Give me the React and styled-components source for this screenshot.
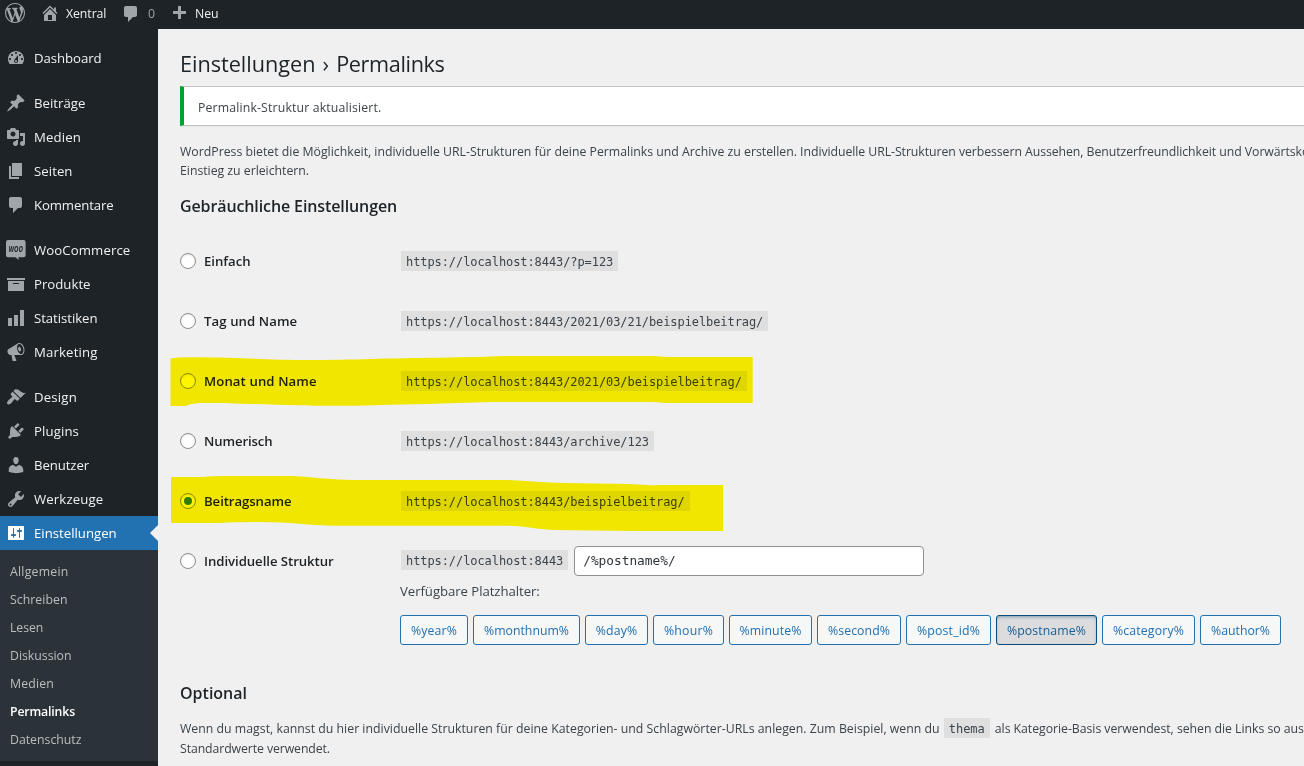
import React from "react";
import styled, { createGlobalStyle, css } from "styled-components";

const GlobalStyle = createGlobalStyle`
  * { box-sizing: border-box; }
  html, body { margin: 0; padding: 0; }
  body {
    background: #f0f0f0;
    color: #3c434a;
    font-family: "Open Sans", "Noto Sans", sans-serif;
    font-size: 12.3px;
    line-height: 19.5px;
    overflow: hidden;
  }
  h1, h2, p, ul { margin: 0; padding: 0; }
`;

const Page = styled.div`
  display: flex;
  flex-direction: column;
  width: 1304px;
  height: 766px;
  overflow: hidden;
`;

/* ---------- Admin bar ---------- */

const AdminBar = styled.header`
  flex: none;
  display: flex;
  align-items: center;
  height: 29px;
  padding: 0 0 3px 5px;
  background: #1d2327;
  color: #f0f0f1;
`;

const BarItem = styled.div`
  display: flex;
  align-items: center;
  gap: ${(p) => p.$gap || 6}px;
  width: ${(p) => p.$width}px;
  white-space: nowrap;
  letter-spacing: ${(p) => p.$track || 0}px;
`;

const BarText = styled.span`
  padding-top: 2px;
  color: ${(p) => (p.$muted ? "#9ca2a7" : "inherit")};
`;

const Glyph = styled.svg`
  flex: none;
  display: block;
  width: 20px;
  height: 20px;
  fill: ${(p) => p.$color || "#a0a5aa"};
`;

/* ---------- Sidebar ---------- */

const Body = styled.div`
  flex: 1;
  display: flex;
  min-height: 0;
`;

const Sidebar = styled.nav`
  flex: none;
  width: 158px;
  padding-top: 12px;
  background: #1d2327;
`;

const MenuItem = styled.div`
  display: flex;
  align-items: center;
  gap: 8px;
  height: 34px;
  margin-bottom: ${(p) => (p.$gapAfter ? 11 : 0)}px;
  padding-left: 6px;
  font-size: 13.2px;
  letter-spacing: ${(p) => p.$track || 0}px;
  color: #f0f0f1;
  ${(p) =>
    p.$active &&
    css`
      position: relative;
      background: #2271b1;
      color: #fff;
      &::after {
        content: "";
        position: absolute;
        right: 0;
        top: 9px;
        border: 8px solid transparent;
        border-left-width: 0;
        border-right-color: #f0f0f0;
      }
    `}
`;

const MenuText = styled.span`
  padding-top: 2px;
`;

const Submenu = styled.ul`
  list-style: none;
  padding: 7px 0 8px;
  background: #2c3338;
`;

const SubmenuItem = styled.li`
  height: 28px;
  padding-left: 10px;
  line-height: 30px;
  color: ${(p) => (p.$current ? "#fff" : "#b9bec3")};
  font-weight: ${(p) => (p.$current ? 600 : 400)};
  letter-spacing: ${(p) => p.$track || 0}px;
`;

/* ---------- Content ---------- */

const Content = styled.main`
  flex: 1;
  min-width: 0;
  padding: 20px 0 0 22px;
  overflow: hidden;
`;

const Title = styled.h1`
  margin-bottom: 8px;
  font-size: 21.7px;
  font-weight: 400;
  line-height: 29px;
  letter-spacing: -0.033px;
  word-spacing: 1.5px;
  color: #1d2327;
`;

const Notice = styled.div`
  display: flex;
  align-items: center;
  height: 40px;
  padding: 4px 0 0 14px;
  border: 1px solid #c3c4c7;
  border-right: 0;
  border-left: 4px solid #00a32a;
  background: #fff;
  box-shadow: 0 1px 1px rgba(0, 0, 0, 0.04);
  font-weight: 500;
  letter-spacing: 0.141px;
`;

const Paragraph = styled.p`
  margin-top: ${(p) => p.$top}px;
`;

const Line = styled.span`
  display: block;
  height: ${(p) => p.$height || 19.5}px;
  white-space: nowrap;
  letter-spacing: ${(p) => p.$track || 0}px;
`;

const Track = styled.span`
  letter-spacing: ${(p) => p.$value}px;
  margin-left: ${(p) => p.$indent || 0}px;
`;

const SectionTitle = styled.h2`
  margin-top: ${(p) => p.$top}px;
  font-size: 16px;
  font-weight: 600;
  line-height: 22px;
  letter-spacing: ${(p) => p.$track || 0}px;
  color: #1d2327;
`;

const OptionTable = styled.div`
  margin-top: 14.5px;
`;

const OptionRow = styled.div`
  position: relative;
  display: grid;
  grid-template-columns: 220px 1fr;
  align-items: ${(p) => (p.$top ? "start" : "center")};
  min-height: 60px;
  padding-top: ${(p) => (p.$top ? 15 : 0)}px;
`;

const OptionLabel = styled.label`
  display: flex;
  align-items: center;
  gap: 8px;
  height: 30px;
  font-size: 13.2px;
  font-weight: 600;
  color: #1d2327;
  letter-spacing: ${(p) => p.$track || 0}px;
`;

const OptionName = styled.span`
  padding-top: 2px;
`;

const Radio = styled.span`
  display: grid;
  place-items: center;
  width: 16px;
  height: 16px;
  border: 1px solid #8c8f94;
  border-radius: 50%;
  background: #fff;
  box-shadow: inset 0 1px 2px rgba(0, 0, 0, 0.1);
  &::before {
    content: "";
    width: 8px;
    height: 8px;
    border-radius: 50%;
    background: ${(p) => (p.$checked ? "#3582c4" : "transparent")};
  }
`;

const Code = styled.code`
  display: inline-block;
  height: 20px;
  margin: 0 1px;
  padding: 2px 5px 0;
  background: rgba(0, 0, 0, 0.07);
  font-family: "DejaVu Sans Mono", monospace;
  font-size: 12px;
  line-height: 19px;
  letter-spacing: -0.08px;
  white-space: nowrap;
`;

const CustomField = styled.div`
  display: flex;
  align-items: center;
  gap: 5px;
  ${Code} {
    margin-bottom: 2px;
  }
`;

const TextInput = styled.input`
  width: 350px;
  height: 30px;
  padding: 0 8px 2px;
  border: 1px solid #8c8f94;
  border-radius: 4px;
  background: #fff;
  color: #2c3338;
  font-family: "DejaVu Sans Mono", monospace;
  font-size: 12.8px;
`;

const Hint = styled.p`
  margin-top: 6px;
  font-size: 13.2px;
  letter-spacing: -0.06px;
`;

const TagList = styled.div`
  display: flex;
  gap: 5px;
  margin-top: 13.5px;
`;

const TagButton = styled.button`
  flex: none;
  width: ${(p) => p.$width}px;
  height: 30px;
  padding: 2px 0 0;
  border: 1px solid ${(p) => (p.$pressed ? "#0a4b78" : "#2271b1")};
  border-radius: 3px;
  background: ${(p) => (p.$pressed ? "#dcdcde" : "#f6f7f7")};
  box-shadow: ${(p) => (p.$pressed ? "inset 0 2px 5px -3px #0a4b78" : "none")};
  color: ${(p) => (p.$pressed ? "#135e96" : "#2271b1")};
  font: inherit;
  letter-spacing: ${(p) => p.$track || 0}px;
  text-align: center;
  white-space: nowrap;
`;

const Marker = styled.svg`
  position: absolute;
  left: -10px;
  top: 0;
  width: 600px;
  height: 60px;
  fill: #fff500;
  mix-blend-mode: multiply;
  pointer-events: none;
`;

/* ---------- Data ---------- */

const icons = {
  wordpress:
    "M20 10c0-5.51-4.49-10-10-10C4.48 0 0 4.49 0 10c0 5.52 4.48 10 10 10 5.51 0 10-4.48 10-10zM7.78 15.37L4.37 6.22c.55-.02 1.17-.08 1.17-.08.5-.06.44-1.13-.06-1.11 0 0-1.45.11-2.37.11-.18 0-.37 0-.58-.01C4.12 2.69 6.87 1.11 10 1.11c2.33 0 4.45.87 6.05 2.34-.68-.11-1.65.39-1.65 1.58 0 .74.45 1.36.9 2.1.35.61.55 1.36.55 2.46 0 1.49-1.4 5-1.4 5l-3.03-8.37c.54-.02.82-.17.82-.17.5-.05.44-1.25-.06-1.22 0 0-1.44.12-2.38.12-.87 0-2.33-.12-2.33-.12-.5-.03-.56 1.2-.06 1.22l.92.08 1.26 3.41zM17.41 10c.24-.64.74-1.87.43-4.25.7 1.29 1.05 2.71 1.05 4.25 0 3.29-1.73 6.24-4.4 7.78.97-2.59 1.94-5.2 2.92-7.78zM6.1 18.09C3.12 16.65 1.11 13.53 1.11 10c0-1.3.23-2.48.72-3.59C3.25 10.3 4.67 14.2 6.1 18.09zm4.03-6.63l2.58 6.98c-.86.29-1.76.45-2.71.45-.79 0-1.57-.11-2.29-.33.81-2.38 1.62-4.74 2.42-7.1z",
  home: "M16 8.5l1.53 1.53-1.06 1.06L10 4.6l-6.47 6.49-1.06-1.06L10 2.5l4 4v-2h2v4zm-6-2.46l6 5.99V18H4v-5.97zM12 17v-5H8v5h4z",
  plus: "M17 8v3h-5v5H9v-5H4V8h5V3h3v5h5z",
  bubble: "M5 3h9c1.1 0 2 .9 2 2v7c0 1.1-.9 2-2 2h-2l-5 5v-5H5c-1.1 0-2-.9-2-2V5c0-1.1.9-2 2-2z",
  dashboard:
    "M3.76 16h12.48c1.1-1.37 1.76-3.11 1.76-5 0-4.42-3.58-8-8-8s-8 3.58-8 8c0 1.89.66 3.63 1.76 5zM10 4c.55 0 1 .45 1 1s-.45 1-1 1-1-.45-1-1 .45-1 1-1zM6 6c.55 0 1 .45 1 1s-.45 1-1 1-1-.45-1-1 .45-1 1-1zm8 0c.55 0 1 .45 1 1s-.45 1-1 1-1-.45-1-1 .45-1 1-1zm-5.37 5.55L12 7v6c0 1.1-.9 2-2 2s-2-.9-2-2c0-.57.24-1.08.63-1.45zM4 10c.55 0 1 .45 1 1s-.45 1-1 1-1-.45-1-1 .45-1 1-1zm12 0c.55 0 1 .45 1 1s-.45 1-1 1-1-.45-1-1 .45-1 1-1zm-5 3c0-.55-.45-1-1-1s-1 .45-1 1 .45 1 1 1 1-.45 1-1z",
  post: "M10.44 3.02l1.82-1.82 6.36 6.35-1.83 1.82c-1.05-.68-2.48-.57-3.41.36l-.75.75c-.92.93-1.04 2.35-.35 3.41l-1.83 1.82-2.41-2.41-2.8 2.79c-.42.42-3.38 2.71-3.8 2.29s1.86-3.39 2.28-3.81l2.79-2.79L4.1 9.36l1.83-1.82c1.05.69 2.48.57 3.4-.36l.75-.75c.93-.92 1.05-2.35.36-3.41z",
  media:
    "M13 11V4c0-.55-.45-1-1-1h-1.67L9 1H5L3.67 3H2c-.55 0-1 .45-1 1v7c0 .55.45 1 1 1h10c.55 0 1-.45 1-1zM7 4.5c1.38 0 2.5 1.12 2.5 2.5S8.38 9.5 7 9.5 4.5 8.38 4.5 7 5.62 4.5 7 4.5zM14 6h5v10.5c0 1.38-1.12 2.5-2.5 2.5S14 17.88 14 16.5s1.12-2.5 2.5-2.5c.17 0 .34.02.5.05V9h-3V6zm-4 8.05V13h2v3.5c0 1.38-1.12 2.5-2.5 2.5S7 17.88 7 16.5 8.12 14 9.5 14c.17 0 .34.02.5.05z",
  page: "M6 15V2h10v13H6zm-1 1h8v2H3V5h2v11z",
  comments: "M5 2h9c1.1 0 2 .9 2 2v7c0 1.1-.9 2-2 2h-2l-5 5v-5H5c-1.1 0-2-.9-2-2V4c0-1.1.9-2 2-2z",
  archive: "M19 4v2H1V4h18zM2 7h16v10H2V7zm11 3V9H7v1h6z",
  chart: "M18 18V2h-4v16h4zm-6 0V7H8v11h4zm-6 0v-8H2v8h4z",
  megaphone:
    "M18.15 5.94c.46 1.62.38 3.22-.02 4.48-.42 1.28-1.26 2.18-2.3 2.48-.16.06-.26.06-.4.06-.06.02-.12.02-.18.02-.06.02-.14.02-.22.02h-6.8l2.22 5.5c.02.14-.06.26-.14.34-.08.1-.24.16-.34.16H6.95c-.1 0-.26-.06-.34-.16-.08-.08-.16-.2-.14-.34l-1-5.5H4.25l-.02-.02c-.5.06-1.08-.18-1.54-.62s-.88-1.08-1.06-1.88c-.24-.8-.2-1.56-.02-2.2.18-.62.58-1.08 1.06-1.3l.02-.02 9-5.4c.1-.06.18-.1.24-.16.06-.04.14-.08.24-.12.16-.08.28-.12.5-.18 1.04-.3 2.24.1 3.22.98s1.84 2.24 2.26 3.86zm-2.58 5.98h-.02c.4-.1.74-.34 1.04-.7.58-.7.86-1.76.86-3.04 0-.64-.1-1.3-.28-1.98-.34-1.36-1.02-2.5-1.78-3.24s-1.68-1.1-2.46-.88c-.82.22-1.4.96-1.7 2-.32 1.04-.28 2.36.06 3.72.38 1.36 1 2.5 1.8 3.24.78.74 1.62 1.1 2.48.88zm-2.54-7.08c.22-.04.42-.02.62.04.38.16.76.48 1.02 1s.42 1.2.42 1.78c0 .3-.04.56-.12.8-.18.48-.44.84-.86.94-.34.1-.8-.06-1.14-.4s-.64-.86-.78-1.5c-.18-.62-.12-1.24.02-1.72s.48-.84.82-.94z",
  appearance:
    "M14.48 11.06L7.41 3.99l1.5-1.5c.5-.56 2.3-.47 3.51.32 1.21.8 1.43 1.28 2.91 2.1 1.18.64 2.45 1.26 4.45.85zm-.71.71L6.7 4.7 4.93 6.47c-.39.39-.39 1.02 0 1.41l1.06 1.06c.39.39.39 1.03 0 1.42-.6.6-1.43 1.11-2.21 1.69-.35.26-.7.53-1.01.84C1.43 14.23.4 16.08 1.4 17.07c.99 1 2.84-.03 4.18-1.36.31-.31.58-.66.85-1.02.57-.78 1.08-1.61 1.69-2.21.39-.39 1.02-.39 1.41 0l1.06 1.06c.39.39 1.02.39 1.41 0z",
  plugins:
    "M13.11 4.36L9.87 7.6 8 5.73l3.24-3.24c.35-.34 1.05-.2 1.56.32.52.51.66 1.21.31 1.55zm-8 1.77l.91-1.12 9.01 9.01-1.19.84c-.71.71-2.63 1.16-3.82 1.16H6.14L4.9 17.26c-.59.59-1.54.59-2.12 0-.59-.58-.59-1.53 0-2.12l1.24-1.24v-3.88c0-1.13.4-3.19 1.09-3.89zm7.26 3.97l3.24-3.24c.34-.35 1.04-.21 1.55.31.52.51.66 1.21.31 1.55l-3.24 3.25z",
  users:
    "M10 9.25c-2.27 0-2.73-3.44-2.73-3.44C7 4.02 7.82 2 9.97 2c2.16 0 2.98 2.02 2.71 3.81 0 0-.41 3.44-2.68 3.44zm0 2.57L12.72 10c2.39 0 4.52 2.33 4.52 4.53v2.49s-3.65 1.13-7.24 1.13c-3.65 0-7.24-1.13-7.24-1.13v-2.49c0-2.25 1.94-4.48 4.47-4.48z",
  tools:
    "M16.68 9.77c-1.34 1.34-3.3 1.67-4.95.99l-5.41 6.52c-.99.99-2.59.99-3.58 0s-.99-2.59 0-3.57l6.52-5.42c-.68-1.65-.35-3.61.99-4.95 1.28-1.28 3.12-1.62 4.72-1.06l-2.89 2.89 2.82 2.82 2.86-2.87c.53 1.58.18 3.39-1.08 4.65zM3.81 16.21c.4.39 1.04.39 1.43 0 .4-.4.4-1.04 0-1.43-.39-.4-1.03-.4-1.43 0-.39.39-.39 1.03 0 1.43z",
  settings:
    "M18 16V4c0-.55-.45-1-1-1H3c-.55 0-1 .45-1 1v12c0 .55.45 1 1 1h14c.55 0 1-.45 1-1zM8 11h1c.55 0 1 .45 1 1s-.45 1-1 1H8v1.5c0 .28-.22.5-.5.5s-.5-.22-.5-.5V13H6c-.55 0-1-.45-1-1s.45-1 1-1h1V5.500c0-.28.22-.5.5-.5s.5.22.5.5V11zm5-2h-1c-.55 0-1-.45-1-1s.45-1 1-1h1V5.500c0-.28.22-.5.5-.5s.5.22.5.5V7h1c.55 0 1 .45 1 1s-.45 1-1 1h-1v5.500c0 .28-.22.5-.5.5s-.5-.22-.5-.5V9z",
};

const menu = [
  { icon: "dashboard", label: "Dashboard", track: -0.063, gapAfter: true },
  { icon: "post", label: "Beiträge", track: 0.031 },
  { icon: "media", label: "Medien", track: 0.141 },
  { icon: "page", label: "Seiten", track: 0.055 },
  { icon: "comments", label: "Kommentare", track: -0.125, gapAfter: true },
  { icon: "woo", label: "WooCommerce", track: 0.098 },
  { icon: "archive", label: "Produkte", track: 0.006 },
  { icon: "chart", label: "Statistiken", track: -0.048 },
  { icon: "megaphone", label: "Marketing", track: 0.144, gapAfter: true },
  { icon: "appearance", label: "Design", track: 0.193 },
  { icon: "plugins", label: "Plugins", track: 0.112 },
  { icon: "users", label: "Benutzer", track: -0.098 },
  { icon: "tools", label: "Werkzeuge", track: 0.129 },
  { icon: "settings", label: "Einstellungen", track: 0.006, active: true },
];

const submenu = [
  { label: "Allgemein", track: 0.22 },
  { label: "Schreiben", track: 0.035 },
  { label: "Lesen", track: -0.068 },
  { label: "Diskussion", track: -0.016 },
  { label: "Medien", track: 0.159 },
  { label: "Permalinks", track: -0.153, current: true },
  { label: "Datenschutz", track: -0.007 },
];

const options = [
  { label: "Einfach", track: -0.038, url: "https://localhost:8443/?p=123" },
  { label: "Tag und Name", track: 0.076, url: "https://localhost:8443/2021/03/21/beispielbeitrag/" },
  {
    label: "Monat und Name",
    track: 0.091,
    url: "https://localhost:8443/2021/03/beispielbeitrag/",
    marker:
      "M.5 7.5Q8 6 22 6.2C70 6.3 95 9 140 9S215 7 270 6.7Q310 6 335 5L485 5Q493 6 505 6H582.7V52H495Q486 51.2 480 51H340C300 51 270 53 230 53.5C190 55 150 55.2 130 54.3C90 53.5 50 51.5 30 52Q19 52.5 16 55H.5Z",
  },
  { label: "Numerisch", track: -0.123, url: "https://localhost:8443/archive/123" },
  {
    label: "Beitragsname",
    track: -0.081,
    url: "https://localhost:8443/beispielbeitrag/",
    checked: true,
    marker:
      "M1 6H34Q40 5 55 5H120C140 5.5 160 9 185 9H335C355 9.3 375 12 395 12L460 13Q475 14.5 490 14H553V60H462L385 59C370 58.7 355 55 335 54.7H165C140 54.5 120 51 90 51Q65 51 50 52H1Z",
  },
];

const tags = [
  { label: "%year%", width: 68, track: 0.122 },
  { label: "%monthnum%", width: 107, track: -0.005 },
  { label: "%day%", width: 63, track: 0.16 },
  { label: "%hour%", width: 71, track: 0.193 },
  { label: "%minute%", width: 83, track: 0.1 },
  { label: "%second%", width: 84, track: 0.068 },
  { label: "%post_id%", width: 85, track: 0.165 },
  { label: "%postname%", width: 101, track: 0.083, pressed: true },
  { label: "%category%", width: 93, track: 0.139 },
  { label: "%author%", width: 81, track: -0.008 },
];

function Icon({ name, color }) {
  return (
    <Glyph viewBox="0 0 20 20" $color={color} aria-hidden="true">
      <path d={icons[name]} />
    </Glyph>
  );
}

const WooText = styled.text`
  font-family: "Open Sans", sans-serif;
  font-size: 8.4px;
  font-weight: 700;
  font-style: italic;
  fill: #1d2327;
`;

function WooIcon() {
  return (
    <Glyph viewBox="0 0 20 20" aria-hidden="true">
      <path d="M2 0h15.6a2 2 0 0 1 2 2v13.2a2 2 0 0 1-2 2h-5.3l.8 2.8-3.8-2.8H2a2 2 0 0 1-2-2V2a2 2 0 0 1 2-2z" />
      <WooText x="2.4" y="11.6" textLength="14.6" lengthAdjust="spacingAndGlyphs">
        WOO
      </WooText>
    </Glyph>
  );
}

export default function App() {
  return (
    <>
      <GlobalStyle />
      <Page>
        <AdminBar>
          <BarItem $width={35}>
            <Icon name="wordpress" />
          </BarItem>
          <BarItem $width={81} $track={-0.07}>
            <Icon name="home" />
            <BarText>Xentral</BarText>
          </BarItem>
          <BarItem $width={48} $gap={7}>
            <Icon name="bubble" />
            <BarText $muted>0</BarText>
          </BarItem>
          <BarItem $width={60} $track={-0.05}>
            <Icon name="plus" />
            <BarText>Neu</BarText>
          </BarItem>
        </AdminBar>
        <Body>
          <Sidebar>
            {menu.map((m) => (
              <MenuItem key={m.label} $active={m.active} $gapAfter={m.gapAfter} $track={m.track}>
                {m.icon === "woo" ? <WooIcon /> : <Icon name={m.icon} color={m.active ? "#fff" : undefined} />}
                <MenuText>{m.label}</MenuText>
              </MenuItem>
            ))}
            <Submenu>
              {submenu.map((s) => (
                <SubmenuItem key={s.label} $current={s.current} $track={s.track}>
                  {s.label}
                </SubmenuItem>
              ))}
            </Submenu>
          </Sidebar>
          <Content>
            <Title>
              Einstellungen › <Track $value={-0.38}>Permalinks</Track>
            </Title>
            <Notice>Permalink-Struktur aktualisiert.</Notice>
            <Paragraph $top={15.5}>
              <Line $track={-0.009}>
                WordPress bietet die Möglichkeit, individuelle URL-Strukturen für deine Permalinks und Archive zu
                erstellen.{" "}
                <Track $value={-0.072}>
                  Individuelle URL-Strukturen verbessern Aussehen, Benutzerfreundlichkeit und Vorwärtskompatibilität
                </Track>
              </Line>
              <Line $track={-0.028}>Einstieg zu erleichtern.</Line>
            </Paragraph>
            <SectionTitle $top={14} $track={-0.11}>
              Gebräuchliche Einstellungen
            </SectionTitle>
            <OptionTable>
              {options.map((o) => (
                <OptionRow key={o.label}>
                  <OptionLabel $track={o.track}>
                    <Radio $checked={o.checked} />
                    <OptionName>{o.label}</OptionName>
                  </OptionLabel>
                  <div>
                    <Code>{o.url}</Code>
                  </div>
                  {o.marker && (
                    <Marker viewBox="0 0 600 60" aria-hidden="true">
                      <path d={o.marker} />
                    </Marker>
                  )}
                </OptionRow>
              ))}
              <OptionRow $top>
                <OptionLabel $track={-0.06}>
                  <Radio />
                  <OptionName>Individuelle Struktur</OptionName>
                </OptionLabel>
                <div>
                  <CustomField>
                    <Code>https://localhost:8443</Code>
                    <TextInput defaultValue="/%postname%/" />
                  </CustomField>
                  <Hint>Verfügbare Platzhalter:</Hint>
                  <TagList>
                    {tags.map((t) => (
                      <TagButton key={t.label} type="button" $width={t.width} $track={t.track} $pressed={t.pressed}>
                        {t.label}
                      </TagButton>
                    ))}
                  </TagList>
                </div>
              </OptionRow>
            </OptionTable>
            <SectionTitle $top={36.5} $track={-0.002}>
              Optional
            </SectionTitle>
            <Paragraph $top={14}>
              <Line $track={0.007} $height={21}>
                Wenn du magst, kannst du hier individuelle Strukturen für deine Kategorien- und Schlagwörter-URLs
                anlegen. Zum Beispiel, wenn du <Code>thema</Code>{" "}
                <Track $value={-0.047} $indent={1}>
                  als Kategorie-Basis verwendest, sehen die Links so aus
                </Track>
              </Line>
              <Line $track={-0.102}>Standardwerte verwendet.</Line>
            </Paragraph>
          </Content>
        </Body>
      </Page>
    </>
  );
}
